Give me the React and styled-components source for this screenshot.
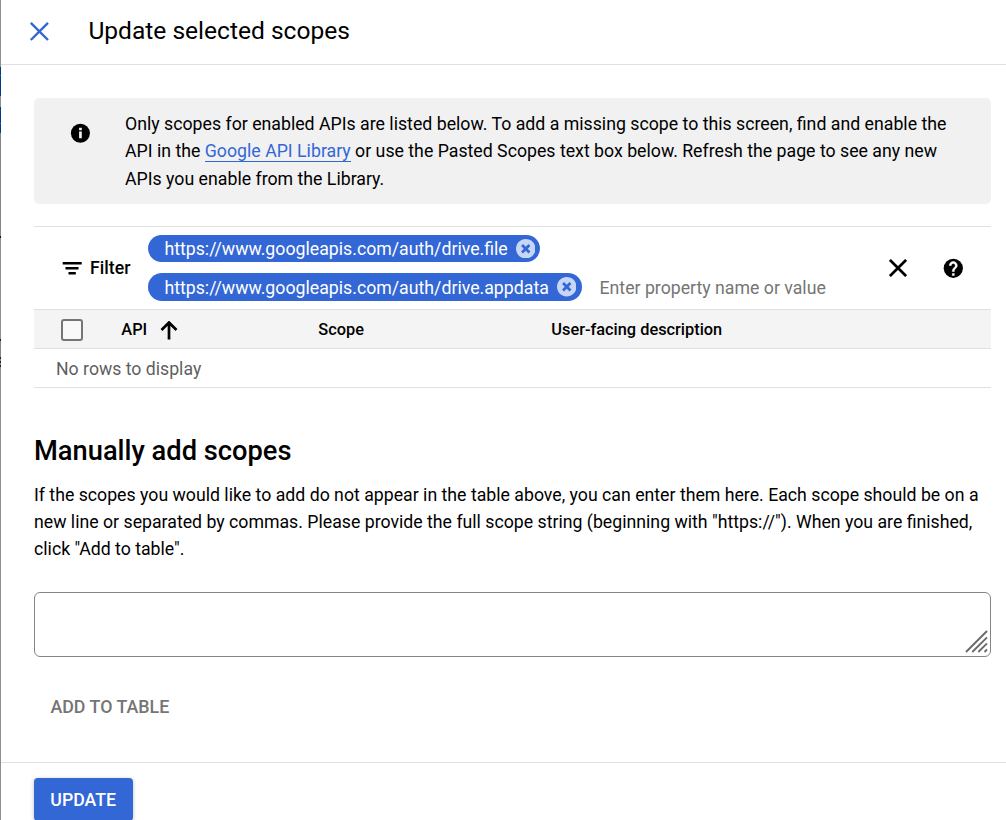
import React from "react";
import styled, { createGlobalStyle } from "styled-components";

const GlobalStyle = createGlobalStyle`
  *, *::before, *::after { box-sizing: border-box; }
  body {
    margin: 0;
    background: #fff;
    color: #000;
    font-family: Roboto, "Liberation Sans", sans-serif;
    overflow: hidden;
  }
`;

const Page = styled.div`
  display: flex;
  width: 1006px;
  height: 820px;
  overflow: hidden;
`;

const Backdrop = styled.div`
  flex: none;
  width: 1px;
  background: linear-gradient(
    #8f8f8f 0 67px, #003a8c 67px 75px, #3f6aa8 75px 76px, #003a8c 76px 96px,
    #8f8f8f 96px 107px, #003a8c 107px 123px, #3f6aa8 123px 124px, #003a8c 124px 133px,
    #858585 133px 236px, #111 236px 238px, #8f8f8f 238px 339px, #222 339px 341px,
    #858585 341px 357px, #222 357px 359px, #858585 359px 361px, #222 361px 363px,
    #858585 363px 365px, #222 365px 367px, #8f8f8f 367px
  );
`;

const Panel = styled.main`
  flex: 1;
  display: flex;
  flex-direction: column;
`;

const Header = styled.header`
  flex: none;
  display: flex;
  align-items: center;
  height: 65px;
  padding: 0 0 3px 28.4px;
  border-bottom: 1px solid #e0e0e0;
`;

const Icon = styled.svg`
  display: block;
  flex: none;
  width: ${(p) => p.$w}px;
  height: ${(p) => p.$h || p.$w}px;
  fill: ${(p) => p.$fill || "#000"};
`;

const Title = styled.h1`
  margin: 0 0 0 39px;
  font-size: 24.56px;
  line-height: 32px;
  font-weight: 400;
`;

const Content = styled.div`
  flex: none;
  height: 697px;
  padding: 33px 15px 0 33px;
`;

const Notice = styled.section`
  display: flex;
  height: 106px;
  padding: 13px 0 0 36px;
  border-radius: 5px;
  background: #f1f1f1;
`;

const NoticeIcon = styled.div`
  width: 55px;
  padding-top: 12px;
`;

const Text = styled.p`
  margin: 0;
  font-size: ${(p) => p.$size}px;
  line-height: ${(p) => p.$leading}px;
  white-space: nowrap;
`;

const Line = styled.span`
  display: block;
`;

const Link = styled.a`
  color: #3367d6;
  text-decoration: none;
  box-shadow: 0 1px 0 #3367d6;
`;

const FilterBar = styled.section`
  display: flex;
  align-items: center;
  height: 83px;
  margin-top: 22px;
  padding-left: 28px;
  border-top: 1px solid #e0e0e0;
`;

const FilterLabel = styled.div`
  width: 58px;
  margin-left: 8px;
  font-size: 17.72px;
  font-weight: 500;
  line-height: 24px;
`;

const Chips = styled.div`
  flex: 1;
  display: flex;
  flex-direction: column;
  gap: 11px;
`;

const ChipRow = styled.div`
  display: flex;
  align-items: center;
`;

const Chip = styled.span`
  display: flex;
  align-items: center;
  justify-content: space-between;
  width: ${(p) => p.$width}px;
  height: ${(p) => p.$height}px;
  padding: 0 ${(p) => p.$end}px 0 16.4px;
  border-radius: 14px;
  background: #3367d6;
  color: #fff;
  font-size: 17.73px;
  line-height: 27px;
  white-space: nowrap;
`;

const ChipText = styled.span`
  padding-top: ${(p) => p.$top}px;
`;

const Placeholder = styled.span`
  margin-left: 17.5px;
  padding-top: 2px;
  color: #757575;
  font-size: 17.72px;
  line-height: 26px;
  white-space: nowrap;
`;

const FilterActions = styled.div`
  display: flex;
  align-items: center;
  gap: 36px;
  padding-right: 27px;
`;

const TableHead = styled.div`
  display: grid;
  grid-template-columns: 60.3px 197px 233px 1fr;
  align-items: center;
  height: 40px;
  padding-left: 27px;
  border-top: 1px solid #e0e0e0;
  border-bottom: 1px solid #e0e0e0;
  background: #f4f4f4;
  font-size: 16.35px;
  font-weight: 500;
  line-height: 24px;
`;

const Checkbox = styled.span`
  width: 22px;
  height: 22px;
  margin-top: 2px;
  border: 2px solid #757575;
  border-radius: 3px;
  background: #f9f9f9;
`;

const HeadCell = styled.span`
  display: flex;
  align-items: center;
  gap: 13px;
  padding-top: 2px;
`;

const EmptyRow = styled.div`
  height: 39px;
  padding: 1px 0 0 22px;
  border-bottom: 1px solid #e0e0e0;
  color: #5f5f5f;
  font-size: 17.68px;
  line-height: 38px;
`;

const Heading = styled.h2`
  margin: 46px 0 14px;
  font-size: 27.27px;
  font-weight: 500;
  line-height: 34px;
`;

const ScopeBox = styled.div`
  display: flex;
  align-items: flex-end;
  justify-content: flex-end;
  height: 65px;
  margin-top: 28.4px;
  padding: 0 2px 3px 0;
  border: 1px solid #80868b;
  border-radius: 6px;
`;

const TextButton = styled.button`
  display: block;
  margin: 37px 0 0;
  padding: 0 16.4px;
  border: 0;
  background: none;
  color: #757575;
  font: 500 17.84px/26px Roboto, sans-serif;
`;

const Footer = styled.footer`
  flex: none;
  height: 58px;
  padding: 15px 0 0 33px;
  border-top: 1px solid #e0e0e0;
`;

const PrimaryButton = styled.button`
  display: block;
  width: 99px;
  height: 43px;
  padding: 1px 0.6px 0 0;
  border: 0;
  border-radius: 4px;
  background: #3367d6;
  box-shadow: 0 1px 4px rgba(0, 0, 0, 0.25);
  color: #fff;
  font: 500 17.72px/42px Roboto, sans-serif;
`;

const Close = ({ size, color, stroke }) => (
  <Icon $w={size} viewBox="0 0 20 20">
    <path d="M1 1 19 19M19 1 1 19" stroke={color} strokeWidth={stroke} />
  </Icon>
);

const HeaderClose = () => (
  <Icon $w={20} viewBox="0 0 20 20">
    <path d="M1.8 1.8 19 19M19 1.8 1.8 19" stroke="#3367d6" strokeWidth="2.4" />
  </Icon>
);

const CircleClose = () => (
  <Icon $w={19.5} viewBox="2 2 20 20" $fill="#c7d6f5">
    <path d="M12 2C6.47 2 2 6.47 2 12s4.47 10 10 10 10-4.47 10-10S17.53 2 12 2z" />
    <path d="m8.2 8.2 7.6 7.6m0-7.6-7.6 7.6" stroke="#3367d6" strokeWidth="2.8" />
  </Icon>
);

const scopes = [
  { name: "https://www.googleapis.com/auth/drive.file", width: 392, height: 27, end: 5, top: 1 },
  { name: "https://www.googleapis.com/auth/drive.appdata", width: 434, height: 28, end: 6, top: 2 },
];

export default function App() {
  return (
    <Page>
      <GlobalStyle />
      <Backdrop />
      <Panel>
        <Header>
          <HeaderClose />
          <Title>Update selected scopes</Title>
        </Header>
        <Content>
          <Notice>
            <NoticeIcon>
              <Icon $w={20} viewBox="0 0 20 20">
                <circle cx="10.4" cy="10.3" r="9.5" />
                <path d="M9.1 8.6h2.7v6.6H9.1zM9.1 4.8h2.7v2.500H9.100z" fill="#f1f1f1" />
              </Icon>
            </NoticeIcon>
            <Text $size={17.73} $leading={27.4}>
              <Line>Only scopes for enabled APIs are listed below. To add a missing scope to this screen, find and enable the</Line>
              <Line>API in the <Link>Google API Library</Link> or use the Pasted Scopes text box below. Refresh the page to see any new</Line>
              <Line>APIs you enable from the Library.</Line>
            </Text>
          </Notice>
          <FilterBar>
            <Icon $w={20} $h={14} viewBox="0 0 20 14">
              <path d="M.7 1h19v2.400H.7zM3.500 6h13v2.400h-13zM6.500 11h7.300v2.400H6.500z" />
            </Icon>
            <FilterLabel>Filter</FilterLabel>
            <Chips>
              {scopes.map((s, i) => (
                <ChipRow key={s.name}>
                  <Chip $width={s.width} $height={s.height} $end={s.end}>
                    <ChipText $top={s.top}>{s.name}</ChipText>
                    <CircleClose />
                  </Chip>
                  {i === scopes.length - 1 && <Placeholder>Enter property name or value</Placeholder>}
                </ChipRow>
              ))}
            </Chips>
            <FilterActions>
              <Close size={18} color="#000" stroke={3} />
              <Icon $w={21} viewBox="0 0 21 21">
                <circle cx="10.3" cy="10.3" r="9.6" />
                <path
                  transform="translate(-1.7 -1.5)"
                  d="M13 19h-2v-2h2v2zm2.070-7.750-.9.920C13.450 12.900 13 13.500 13 15h-2v-.5c0-1.100.450-2.100 1.170-2.830l1.240-1.260c.370-.360.590-.860.590-1.410 0-1.100-.9-2-2-2s-2 .9-2 2H8c0-2.210 1.790-4 4-4s4 1.790 4 4c0 .880-.360 1.680-.930 2.250z"
                  fill="#fff"
                  stroke="#fff"
                  strokeWidth="0.5"
                />
              </Icon>
            </FilterActions>
          </FilterBar>
          <TableHead>
            <Checkbox />
            <HeadCell>
              API
              <Icon $w={18} $h={19} viewBox="0 0 18 19">
                <path d="M9 18.500V2M1.500 9 9 1.500 16.500 9" fill="none" stroke="#000" strokeWidth="2.700" />
              </Icon>
            </HeadCell>
            <HeadCell>Scope</HeadCell>
            <HeadCell>User-facing description</HeadCell>
          </TableHead>
          <EmptyRow>No rows to display</EmptyRow>
          <Heading>Manually add scopes</Heading>
          <Text $size={17.72} $leading={27.2}>
            <Line>If the scopes you would like to add do not appear in the table above, you can enter them here. Each scope should be on a</Line>
            <Line>new line or separated by commas. Please provide the full scope string (beginning with "https://"). When you are finished,</Line>
            <Line>click "Add to table".</Line>
          </Text>
          <ScopeBox>
            <Icon $w={23} viewBox="0 0 23 23">
              <path d="M1 22 22 1M7.300 22 22 7.300M13.300 22 22 13.300M19.500 22 22 19.500" stroke="#6b6b6b" strokeWidth="1.900" />
            </Icon>
          </ScopeBox>
          <TextButton>ADD TO TABLE</TextButton>
        </Content>
        <Footer>
          <PrimaryButton>UPDATE</PrimaryButton>
        </Footer>
      </Panel>
    </Page>
  );
}
